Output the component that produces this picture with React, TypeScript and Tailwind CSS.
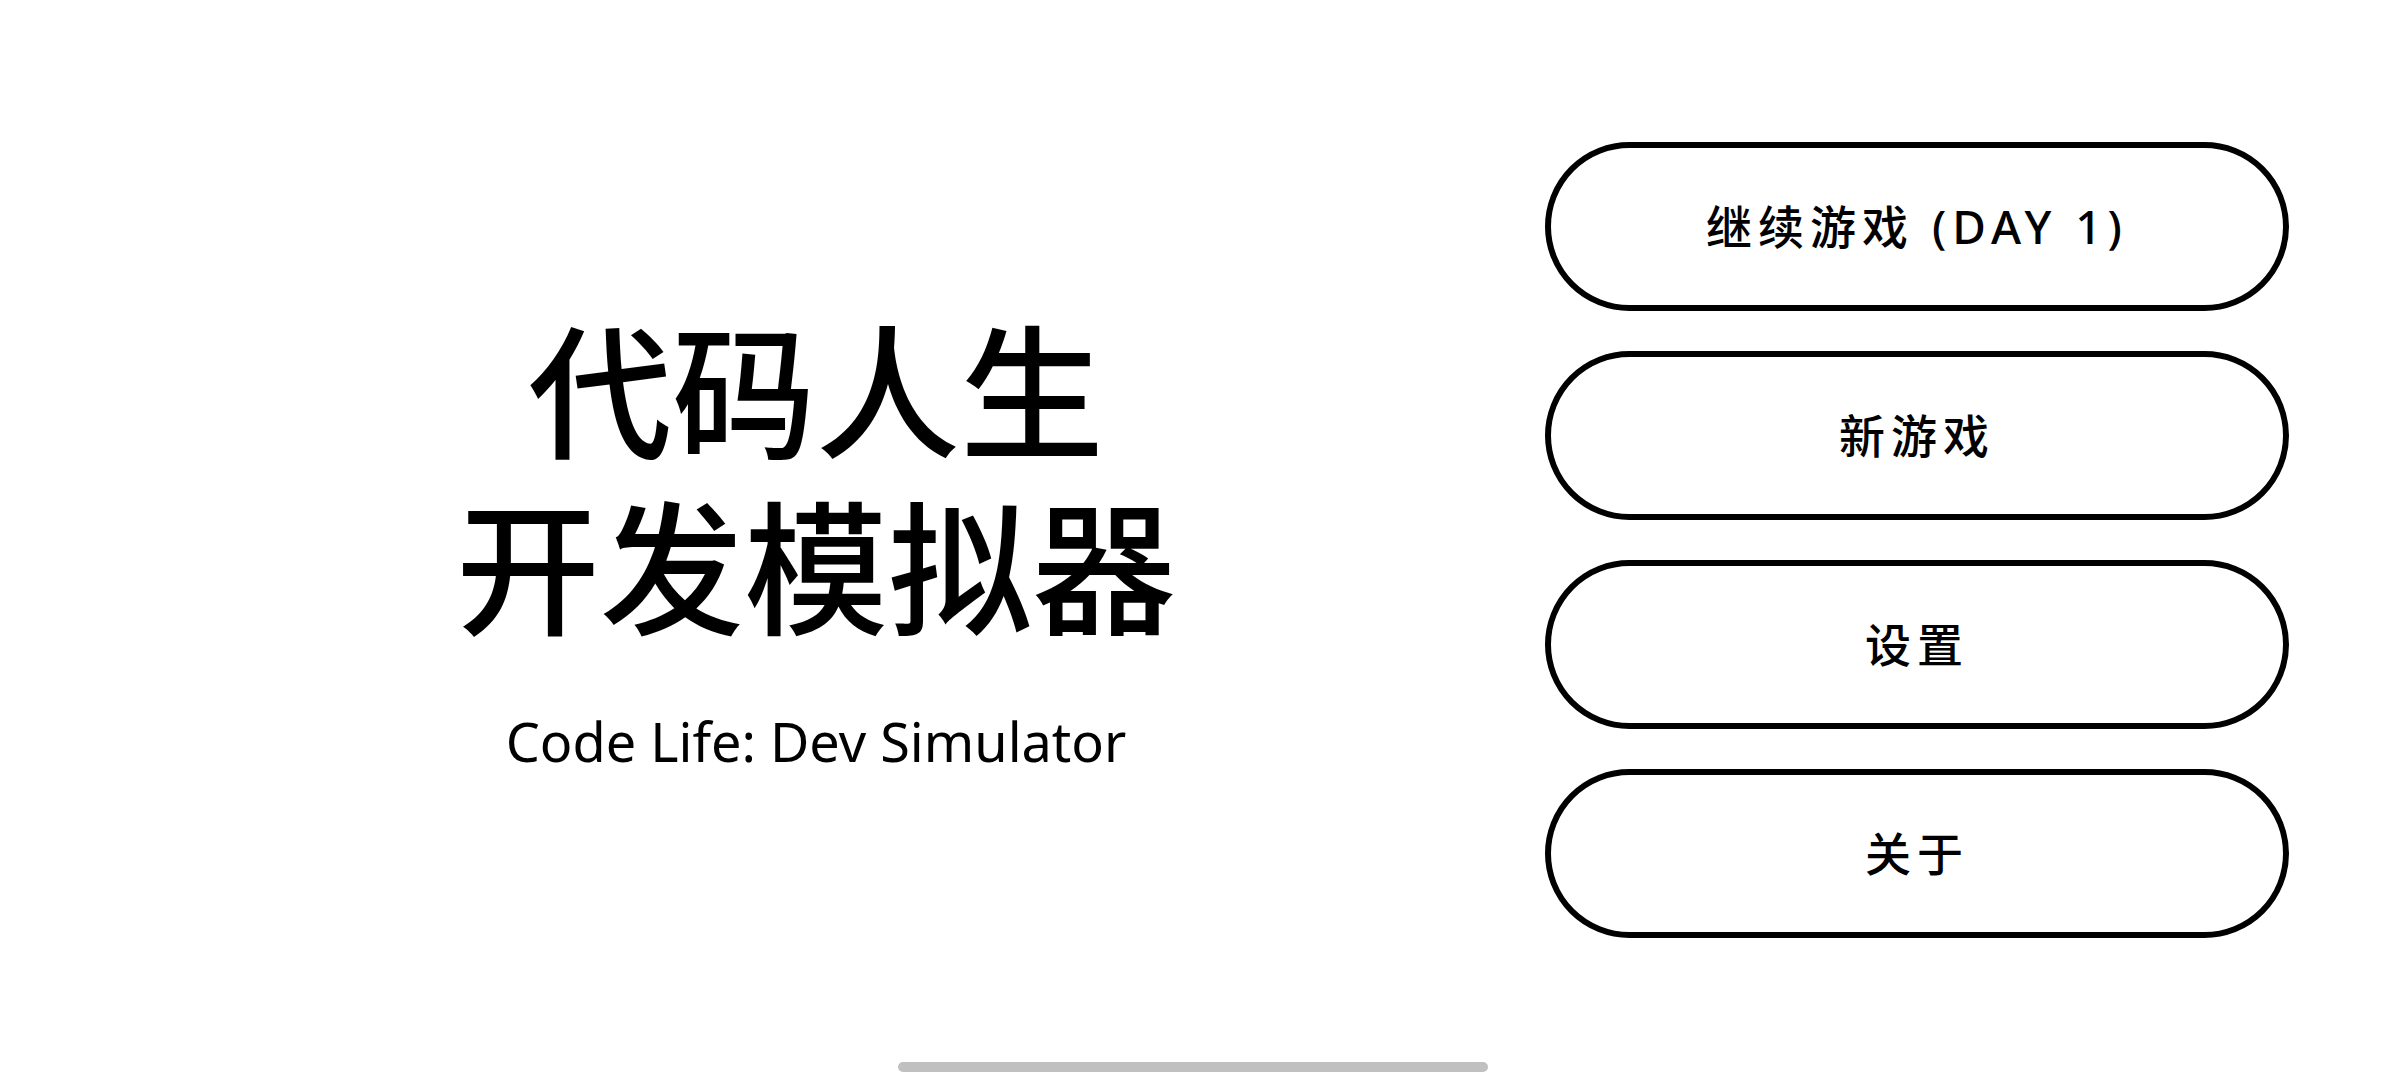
import React from "react";

const menu = ["继续游戏 (DAY 1)", "新游戏", "设置", "关于"];

const cjk = { fontFamily: '"Noto Sans", "Noto Sans CJK SC", sans-serif' };

export default function App() {
  return (
    <div className="relative flex h-[1080px] w-[2388px] items-center overflow-hidden bg-white text-black" style={cjk}>
      <div className="flex flex-1 flex-col items-center pl-[135px] pr-[48px]">
        <h1 className="flex flex-col items-center text-[144px] font-medium leading-[176px]">
          <span>代码人生</span>
          <span>开发模拟器</span>
        </h1>
        <p className="mt-[50px] text-[54px] leading-[70px]">Code Life: Dev Simulator</p>
      </div>
      <nav className="mr-[99px] flex w-[744px] flex-col gap-[40px]">
        {menu.map((label) => (
          <button
            key={label}
            className="flex h-[169px] items-center justify-center rounded-full border-[6px] border-black bg-white text-[46px] font-medium tracking-[6px]"
          >
            {label}
          </button>
        ))}
      </nav>
      <div className="absolute bottom-[8px] left-[898px] h-[10px] w-[590px] rounded-full bg-[#c0c0c0]" />
    </div>
  );
}
